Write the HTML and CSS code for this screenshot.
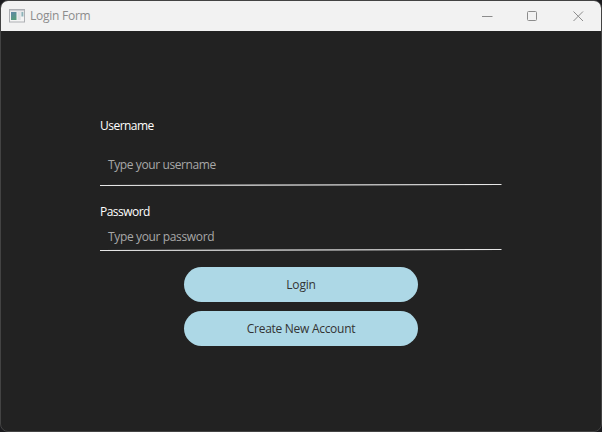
FILE: index.html
```html
<!DOCTYPE html>
<html lang="en">
<head>
<meta charset="utf-8">
<title>Login Form</title>
<link rel="stylesheet" href="styles.css">
</head>
<body>
<div class="window">
  <header class="titlebar">
    <svg class="app-icon" width="16" height="14" viewBox="0 0 16 14">
      <defs><linearGradient id="pane" x1="0" y1="0" x2="0.4" y2="1"><stop offset="0" stop-color="#5f87a8"/><stop offset="1" stop-color="#579b7e"/></linearGradient></defs>
      <rect x=".5" y=".5" width="15" height="12.5" fill="#f4f4f4" stroke="#aeb0b4"/>
      <rect x="1" y="1" width="14" height="1.3" fill="#c9cbd0"/>
      <rect x="2" y="3" width="5.5" height="8" fill="url(#pane)"/>
      <rect x="8.5" y="3" width="3.2" height="8" fill="#dfe1e4"/>
      <rect x="12.4" y="3" width="2" height="4.5" fill="#8eb3b9"/>
    </svg>
    <span class="title">Login Form</span>
    <svg class="controls" width="102" height="12" viewBox="0 0 102 12">
      <path d="M0 6.5H10.5"/>
      <rect x="45.5" y="1.5" width="9" height="9" rx="1"/>
      <path d="M91.5 1.5L101 11M101 1.5L91.5 11"/>
    </svg>
  </header>
  <main class="form">
    <label class="label user">Username</label>
    <div class="field tall"><span class="hint">Type your username</span></div>
    <svg class="rule" width="402" height="3" viewBox="0 0 402 3"><path d="M0 1.5L401.5 .5"/></svg>
    <label class="label pass">Password</label>
    <div class="field"><span class="hint hint-pass">Type your password</span></div>
    <svg class="rule" width="402" height="3" viewBox="0 0 402 3"><path d="M0 1.5L401.5 .5"/></svg>
    <div class="actions">
      <button class="button"><span class="login">Login</span></button>
      <button class="button"><span class="create">Create New Account</span></button>
    </div>
  </main>
</div>
</body>
</html>
```
FILE: styles.css
```css
* { box-sizing: border-box; }
body { margin: 0; background: #1b1b1e; font: 12px/16px "Open Sans", "Noto Sans", sans-serif; }
.window { width: 602px; height: 432px; border: 1px solid #434343; border-radius: 8px; overflow: hidden; background: #222; }
.titlebar { height: 30px; background: #f2f2f2; display: flex; align-items: center; padding: 0 17px 0 8px; color: #8c8c8c; }
.app-icon { display: block; }
.title { margin-left: 5px; letter-spacing: -0.25px; }
.controls { margin-left: auto; fill: none; stroke: #8c8c8c; stroke-width: 1; }
.form { padding: 87px 99px 0; display: flex; flex-direction: column; }
.label { height: 16px; color: #fff; letter-spacing: -0.52px; }
.field { height: 29px; padding: 5px 8px 0; display: flex; align-items: center; color: #a8a8a8; }
.tall { height: 50px; padding-top: 12px; }
.rule { display: block; stroke: #e6e6e6; stroke-width: 1.1; fill: none; }
.hint { letter-spacing: -0.4px; }
.hint-pass { letter-spacing: -0.36px; }
.pass { margin-top: 17px; }
.actions { margin: 15px 0 0 84px; width: 234px; display: flex; flex-direction: column; gap: 9px; }
.button { height: 35px; padding: 0; border: 0; border-radius: 18px; background: #add8e6; color: #333; font: inherit; }
.login { letter-spacing: -0.2px; }
.create { letter-spacing: -0.28px; }
```
